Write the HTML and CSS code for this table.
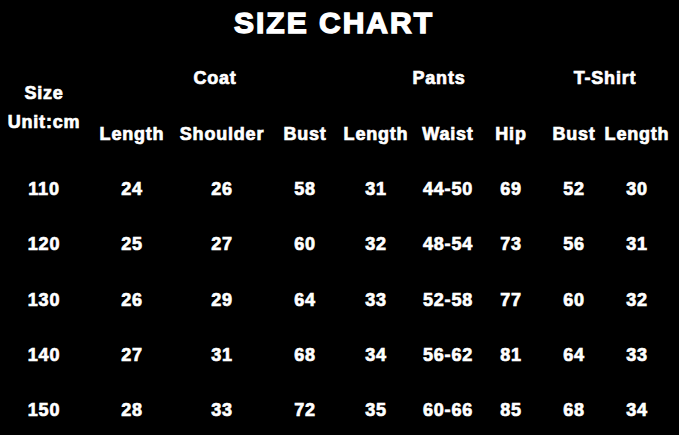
FILE: index.html
```html
<!DOCTYPE html>
<html>
<head>
<meta charset="utf-8">
<link rel="stylesheet" href="styles.css">
</head>
<body>
<div class="chart">
  <h1 class="title">SIZE CHART</h1>
  <div class="grid">
    <div class="size-head"><span>Size</span><span>Unit:cm</span></div>
    <div class="group g-coat">Coat</div>
    <div class="group g-pants">Pants</div>
    <div class="group g-shirt">T-Shirt</div>

    <div class="sub">Length</div><div class="sub">Shoulder</div><div class="sub">Bust</div>
    <div class="sub">Length</div><div class="sub">Waist</div><div class="sub">Hip</div>
    <div class="sub">Bust</div><div class="sub">Length</div>

    <div class="cell">110</div><div class="cell">24</div><div class="cell">26</div><div class="cell">58</div><div class="cell">31</div><div class="cell">44-50</div><div class="cell">69</div><div class="cell">52</div><div class="cell">30</div>
    <div class="cell">120</div><div class="cell">25</div><div class="cell">27</div><div class="cell">60</div><div class="cell">32</div><div class="cell">48-54</div><div class="cell">73</div><div class="cell">56</div><div class="cell">31</div>
    <div class="cell">130</div><div class="cell">26</div><div class="cell">29</div><div class="cell">64</div><div class="cell">33</div><div class="cell">52-58</div><div class="cell">77</div><div class="cell">60</div><div class="cell">32</div>
    <div class="cell">140</div><div class="cell">27</div><div class="cell">31</div><div class="cell">68</div><div class="cell">34</div><div class="cell">56-62</div><div class="cell">81</div><div class="cell">64</div><div class="cell">33</div>
    <div class="cell">150</div><div class="cell">28</div><div class="cell">33</div><div class="cell">72</div><div class="cell">35</div><div class="cell">60-66</div><div class="cell">85</div><div class="cell">68</div><div class="cell">34</div>
  </div>
</div>
</body>
</html>
```
FILE: styles.css
```css
html, body {
  margin: 0;
  padding: 0;
  background: #000;
}
body {
  width: 679px;
  height: 435px;
  overflow: hidden;
  color: #fff;
  font-family: "Liberation Sans", Arial, sans-serif;
  font-weight: 700;
}
.chart {
  width: 668px;
}
.title {
  margin: 0;
  height: 45px;
  line-height: 45px;
  text-align: center;
  font-size: 30px;
  letter-spacing: 2px;
  -webkit-text-stroke: 1.4px #fff;
  font-weight: 700;
}
.grid {
  display: grid;
  grid-template-columns: 88px 88px 92px 74px 68px 76px 50px 76px 50px;
  grid-template-rows: 66px 51px 55.25px 55.25px 55.25px 55.25px 55.25px;
  font-size: 18px;
  letter-spacing: 0.8px;
  -webkit-text-stroke: 0.7px #fff;
}
.size-head {
  grid-column: 1;
  grid-row: 1 / span 2;
  display: flex;
  flex-direction: column;
  align-items: center;
  padding-top: 34px;
  line-height: 29px;
}
.group {
  grid-row: 1;
  display: flex;
  align-items: center;
  justify-content: center;
}
.g-coat { grid-column: 2 / span 3; }
.g-pants { grid-column: 5 / span 3; }
.g-shirt { grid-column: 8 / span 2; padding-left: 12px; }
.sub {
  grid-row: 2;
  display: flex;
  justify-content: center;
  align-items: flex-start;
  line-height: 22px;
  padding-top: 12px;
  white-space: nowrap;
  min-width: 0;
}
.cell {
  display: flex;
  align-items: center;
  justify-content: center;
  min-width: 0;
}
```
